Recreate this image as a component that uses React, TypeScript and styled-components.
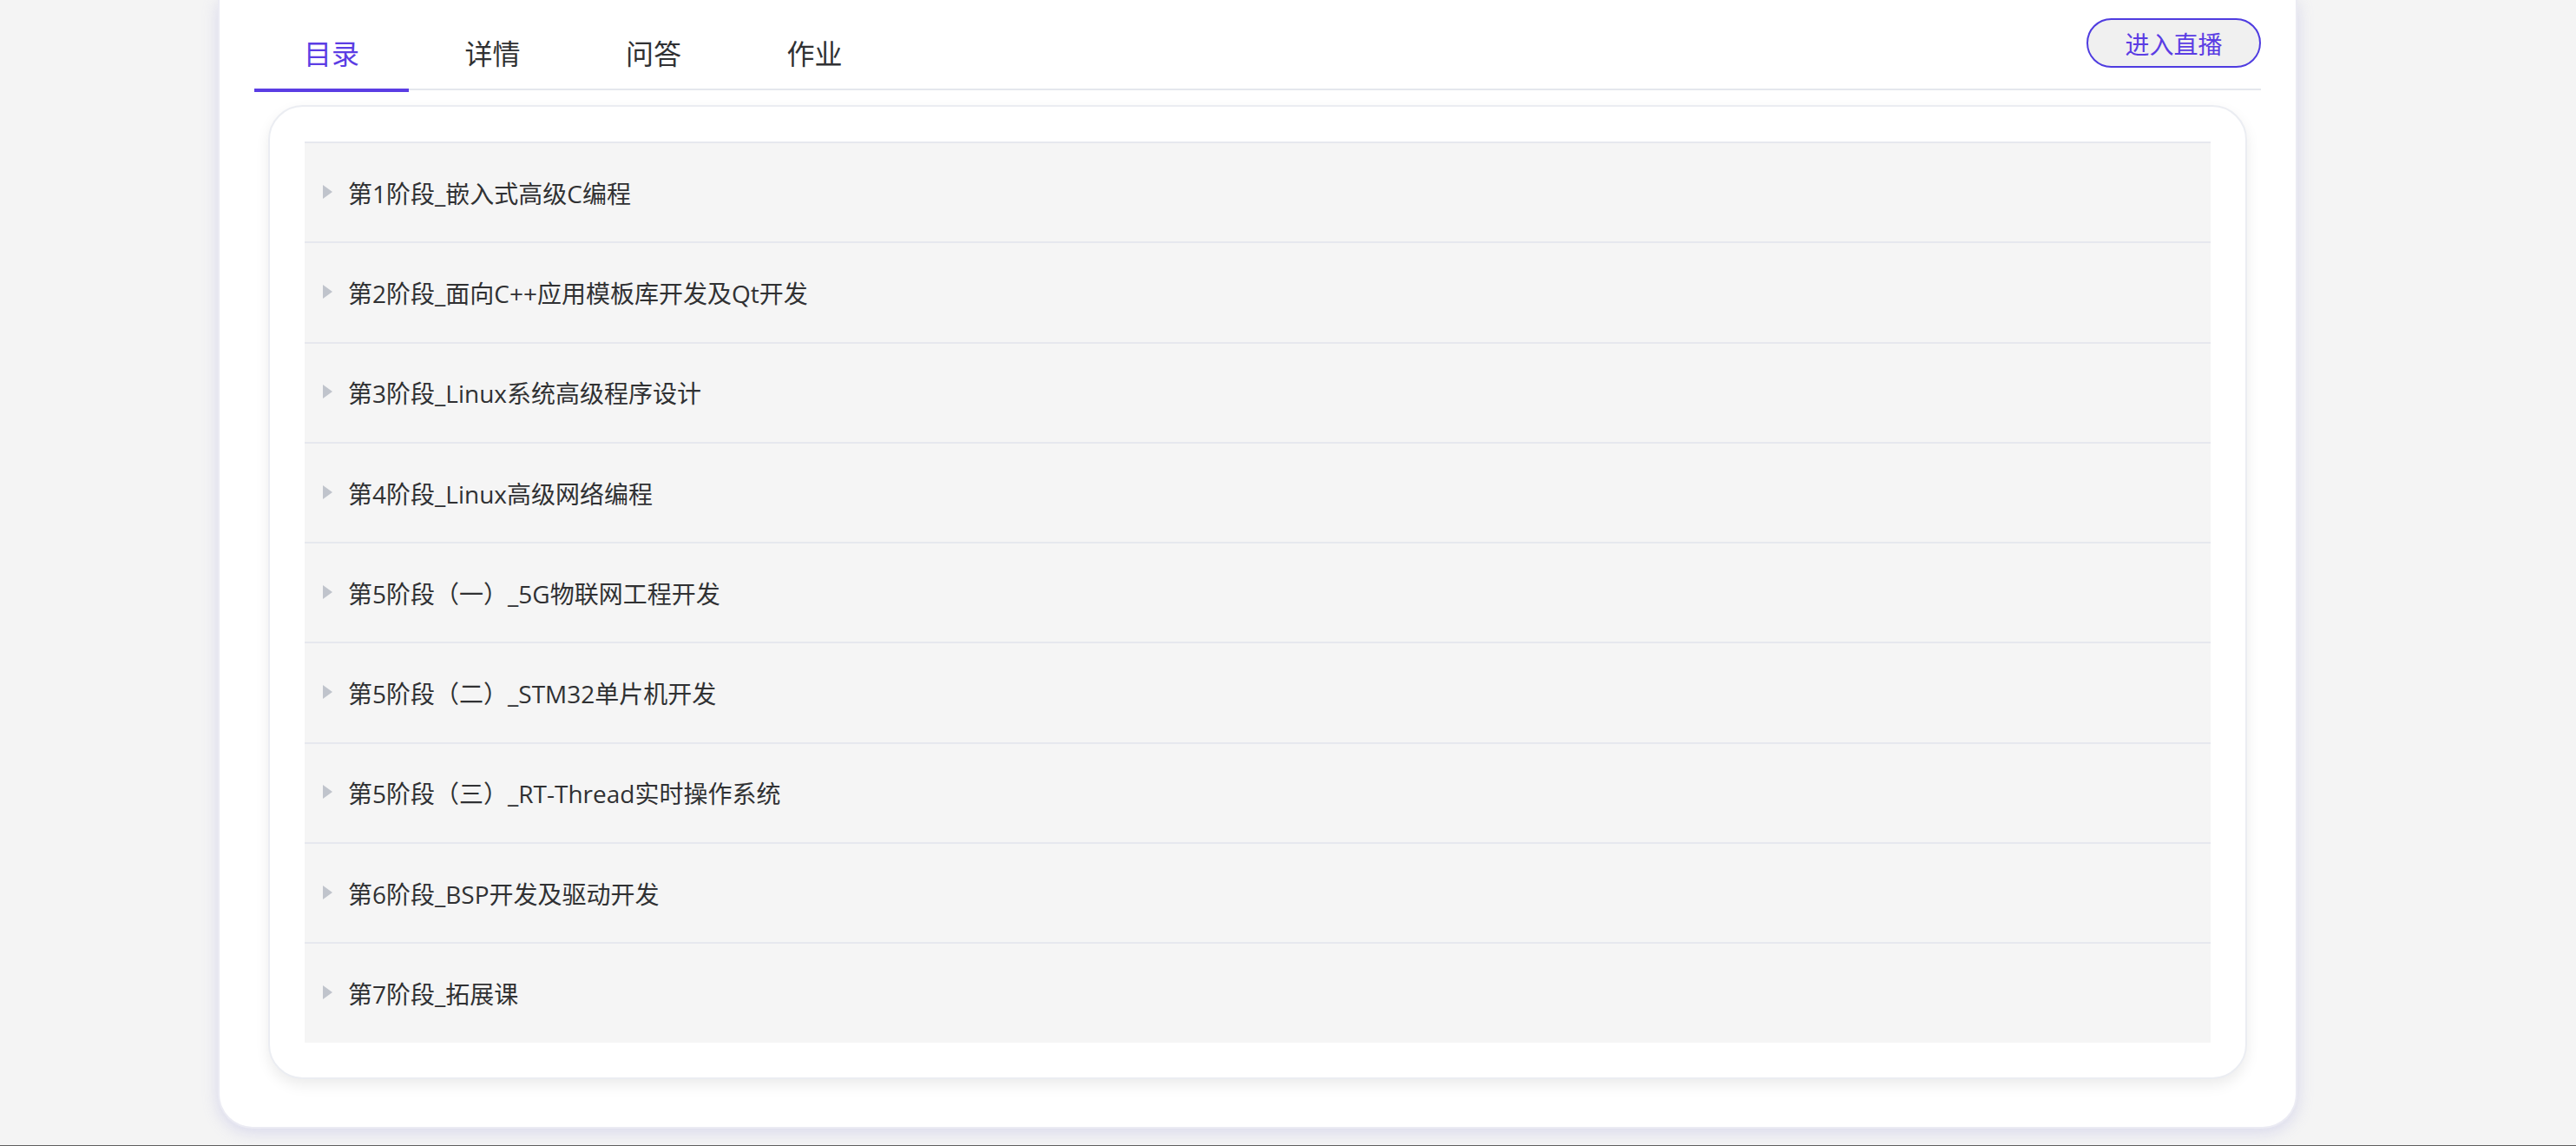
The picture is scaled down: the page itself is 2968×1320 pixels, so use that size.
import React, { useState } from "react";
import styled, { createGlobalStyle } from "styled-components";

const Global = createGlobalStyle`
  html, body {
    margin: 0;
    padding: 0;
    background: #f4f4f4;
    font-family: "Microsoft YaHei", "Open Sans", "Noto Sans CJK SC", sans-serif;
  }
  * { box-sizing: border-box; }
`;

const Page = styled.div`
  width: 2968px;
  height: 1320px;
  display: flex;
  flex-direction: column;
  overflow: hidden;
`;

const Stage = styled.div`
  flex: 1;
  padding-left: 251px;
`;

const Card = styled.div`
  width: 2396px;
  height: 1300px;
  background: #fff;
  border: 2px solid #ebebf3;
  border-top: none;
  border-radius: 0 0 40px 40px;
  box-shadow: 0 4px 18px rgba(150, 150, 215, 0.3);
  padding: 0 40px 40px;
  display: flex;
  flex-direction: column;
`;

const Header = styled.div`
  height: 104px;
  display: flex;
  justify-content: space-between;
  align-items: flex-start;
  border-bottom: 2px solid #e4e7ed;
`;

const Tabs = styled.div`
  display: flex;
  gap: 7.5px;
  height: 102px;
  align-items: flex-end;
`;

const Tab = styled.div<{ $active?: boolean }>`
  position: relative;
  width: 178px;
  height: 80px;
  line-height: 80px;
  text-align: center;
  font-size: 32px;
  color: ${(p) => (p.$active ? "#5b3de4" : "#303133")};
  cursor: pointer;
  &::after {
    content: "";
    display: ${(p) => (p.$active ? "block" : "none")};
    position: absolute;
    left: 0;
    right: 0;
    bottom: -4px;
    height: 4px;
    background: #5b3de4;
  }
`;

const LiveButton = styled.button`
  margin-top: 21px;
  width: 201px;
  height: 57px;
  border: 2px solid #4f3ce0;
  border-radius: 29px;
  background: #f0f0f0;
  color: #5b3de4;
  font-family: inherit;
  font-size: 28px;
  padding: 0;
  cursor: pointer;
`;

const Inner = styled.div`
  margin: 17px 16px 0;
  background: #fff;
  border: 2px solid #ebedf2;
  border-radius: 40px;
  box-shadow: 0 7px 16px rgba(0, 0, 0, 0.08);
  padding: 40px 40px 40px;
`;

const List = styled.div`
  display: flex;
  flex-direction: column;
  background: #f5f5f5;
`;

const Row = styled.div`
  height: 115.3px;
  border-top: 2px solid #e6e8ee;
  display: flex;
  align-items: center;
  padding-left: 21px;
  gap: 18px;
  font-size: 28px;
  color: #303133;
  cursor: pointer;
`;

const Caret = styled.span`
  width: 0;
  height: 0;
  border-top: 8px solid transparent;
  border-bottom: 8px solid transparent;
  border-left: 11px solid #c0c4cc;
  margin-top: -2px;
`;

const BottomLine = styled.div`
  height: 1px;
  background: #5f5f5f;
`;

const stages = [
  "第1阶段_嵌入式高级C编程",
  "第2阶段_面向C++应用模板库开发及Qt开发",
  "第3阶段_Linux系统高级程序设计",
  "第4阶段_Linux高级网络编程",
  "第5阶段（一）_5G物联网工程开发",
  "第5阶段（二）_STM32单片机开发",
  "第5阶段（三）_RT-Thread实时操作系统",
  "第6阶段_BSP开发及驱动开发",
  "第7阶段_拓展课",
];

const tabs = ["目录", "详情", "问答", "作业"];

export default function App() {
  const [active, setActive] = useState(0);
  return (
    <>
      <Global />
      <Page>
        <Stage>
          <Card>
            <Header>
              <Tabs>
                {tabs.map((t, i) => (
                  <Tab key={t} $active={i === active} onClick={() => setActive(i)}>
                    {t}
                  </Tab>
                ))}
              </Tabs>
              <LiveButton>进入直播</LiveButton>
            </Header>
            <Inner>
              <List>
                {stages.map((s) => (
                  <Row key={s}>
                    <Caret />
                    <span>{s}</span>
                  </Row>
                ))}
              </List>
            </Inner>
          </Card>
        </Stage>
        <BottomLine />
      </Page>
    </>
  );
}
